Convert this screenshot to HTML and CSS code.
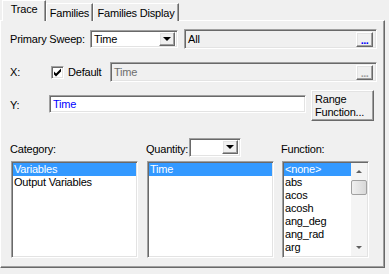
FILE: index.html
```html
<!DOCTYPE html>
<html lang="en">
<head>
    <meta charset="UTF-8">
    <title>Trace</title>
    <link rel="stylesheet" href="styles.css">
</head>
<body>
    <div class="tabs">
        <div class="tab tab-trace active">Trace</div>
        <div class="tab tab-families">Families</div>
        <div class="tab tab-display">Families Display</div>
    </div>

    <div class="panel">
        <!-- Primary sweep -->
        <div class="row row-sweep">
            <span class="sweep-label">Primary Sweep:</span>
            <div class="combo sweep-combo">
                <span class="combo-text">Time</span>
                <span class="drop"><span class="arrow-down"></span></span>
            </div>
            <div class="field all-field">
                <span class="field-text">All</span>
                <span class="dots">...</span>
            </div>
        </div>

        <!-- X -->
        <div class="row row-x">
            <span class="x-label">X:</span>
            <span class="check">
                <svg width="9" height="9" viewBox="0 0 9 9"><path d="M1 3.5 L3 5.5 L8 0.5 L8 3.5 L3 8.5 L1 6.5 Z" fill="#000"/></svg>
            </span>
            <span class="default-label">Default</span>
            <div class="field x-field">
                <span class="field-text disabled">Time</span>
                <span class="dots disabled">...</span>
            </div>
        </div>

        <!-- Y -->
        <div class="row row-y">
            <span class="y-label">Y:</span>
            <div class="textbox y-box">Time</div>
            <div class="button range-btn">Range<br>Function...</div>
        </div>

        <!-- Lists -->
        <div class="lists">
            <div class="col col-category">
                <div class="col-head"><span class="head-label">Category:</span></div>
                <div class="listbox">
                    <div class="item selected">Variables</div>
                    <div class="item">Output Variables</div>
                </div>
            </div>
            <div class="col col-quantity">
                <div class="col-head">
                    <span class="head-label">Quantity:</span>
                    <div class="combo quantity-combo">
                        <span class="combo-text"></span>
                        <span class="drop"><span class="arrow-down"></span></span>
                    </div>
                </div>
                <div class="listbox">
                    <div class="item selected">Time</div>
                </div>
            </div>
            <div class="col col-function">
                <div class="col-head"><span class="head-label">Function:</span></div>
                <div class="listbox function-list">
                    <div class="items">
                        <div class="item selected">&lt;none&gt;</div>
                        <div class="item">abs</div>
                        <div class="item">acos</div>
                        <div class="item">acosh</div>
                        <div class="item">ang_deg</div>
                        <div class="item">ang_rad</div>
                        <div class="item">arg</div>
                        <div class="item">asin</div>
                    </div>
                    <div class="scrollbar">
                        <span class="scroll-btn"><span class="arrow-up"></span></span>
                        <span class="thumb"></span>
                        <span class="track"></span>
                        <span class="scroll-btn"><span class="arrow-down small"></span></span>
                    </div>
                </div>
            </div>
        </div>
    </div>
</body>
</html>
```

FILE: styles.css
```css
/* General */
* {
    box-sizing: border-box;
}
body {
    margin: 0;
    width: 389px;
    height: 274px;
    overflow: hidden;
    background-color: #f0f0f0;
    font-family: "Liberation Sans", Arial, sans-serif;
    font-size: 11px;
    letter-spacing: -0.2px;
    color: #000;
}

/* Tabs */
.tabs {
    display: flex;
    align-items: flex-end;
    height: 21px;
    padding-left: 2px;
}
.tab {
    height: 18px;
    padding-top: 3px;
    text-align: center;
    line-height: 13px;
    background-color: #f0f0f0;
    border: 1px solid;
    border-bottom: none;
    border-color: #fff #696969 transparent #fff;
    box-shadow: inset -1px 0 #a0a0a0;
}
.tab.active {
    position: relative;
    z-index: 1;
    height: 21px;
    padding-top: 2px;
}
.tab-trace { width: 44px; }
.tab-families { width: 47px; }
.tab-display { width: 86px; }

/* Panel */
.panel {
    width: 385px;
    height: 248px;
    margin-top: -1px;
    padding: 8px 0 0 9px;
    border: 1px solid;
    border-color: #fff #696969 #696969 #fff;
    box-shadow: inset -1px -1px #a0a0a0;
}
.row {
    display: flex;
    align-items: center;
}

/* Shared controls */
.combo, .field, .textbox, .listbox, .check {
    border: 1px solid;
    border-color: #a0a0a0 #fff #fff #a0a0a0;
    box-shadow: inset 1px 1px #696969, inset -1px -1px #e3e3e3;
}
.combo {
    display: flex;
    align-items: center;
    height: 18px;
    padding: 2px;
    background-color: #fff;
}
.combo-text {
    flex: 1;
    padding-left: 1px;
}
.drop, .dots, .button, .scroll-btn {
    background-color: #f0f0f0;
    border: 1px solid;
    border-color: #fff #696969 #696969 #fff;
    box-shadow: inset -1px -1px #a0a0a0, inset 1px 1px #e3e3e3;
}
.drop {
    display: flex;
    align-items: center;
    justify-content: center;
    width: 16px;
    height: 14px;
}
.arrow-down {
    width: 0;
    height: 0;
    border-left: 4px solid transparent;
    border-right: 4px solid transparent;
    border-top: 4px solid #000;
}
.arrow-down.small {
    border-left-width: 3px;
    border-right-width: 3px;
    border-top: 3px solid #606060;
}
.arrow-up {
    width: 0;
    height: 0;
    border-left: 3px solid transparent;
    border-right: 3px solid transparent;
    border-bottom: 3px solid #606060;
}
.field {
    display: flex;
    align-items: center;
    height: 20px;
    padding: 2px 3px;
    background-color: #f0f0f0;
}
.field-text {
    flex: 1;
}
.disabled {
    color: #6d6d6d;
}
.dots {
    width: 17px;
    height: 15px;
    text-align: center;
    line-height: 15px;
    font-weight: bold;
    color: #0000ff;
    letter-spacing: -0.5px;
}
.dots.disabled {
    color: #a0a0a0;
}

/* Primary sweep row */
.row-sweep {
    height: 20px;
}
.sweep-label {
    width: 80px;
}
.sweep-combo {
    width: 88px;
}
.all-field {
    width: 193px;
    margin-left: 6px;
}

/* X row */
.row-x {
    height: 20px;
    margin-top: 13px;
}
.x-label {
    width: 41px;
}
.check {
    display: flex;
    align-items: center;
    justify-content: center;
    width: 13px;
    height: 13px;
    background-color: #fff;
}
.default-label {
    width: 42px;
    margin-left: 4px;
}
.x-field {
    width: 267px;
}

/* Y row */
.row-y {
    height: 31px;
    margin-top: 8px;
    align-items: flex-start;
}
.y-label {
    width: 39px;
    margin-top: 9px;
}
.y-box {
    width: 257px;
    height: 18px;
    margin-top: 5px;
    padding: 2px 3px;
    line-height: 13px;
    background-color: #fff;
    color: #0000ff;
}
.range-btn {
    width: 63px;
    height: 31px;
    margin-left: 5px;
    padding: 2px 3px;
    line-height: 13px;
}

/* Lists */
.lists {
    display: flex;
    margin-top: 16px;
}
.col {
    display: flex;
    flex-direction: column;
}
.col-category {
    width: 127px;
    margin-left: 1px;
}
.col-quantity {
    width: 127px;
    margin-left: 9px;
}
.col-function {
    width: 87px;
    margin-left: 8px;
}
.col-head {
    display: flex;
    align-items: center;
    height: 20px;
    margin-bottom: 4px;
    padding-top: 3px;
}
.head-label {
    margin-left: -1px;
}
.quantity-combo {
    width: 52px;
    height: 19px;
    margin-left: 1px;
    margin-top: -3px;
}
.listbox {
    height: 97px;
    padding: 1px;
    background-color: #fff;
    overflow: hidden;
}
.item {
    height: 13px;
    line-height: 13px;
    padding-left: 1px;
    white-space: nowrap;
}
.item.selected {
    background-color: #3399ff;
    color: #fff;
}
.function-list {
    display: flex;
}
.items {
    flex: 1;
    overflow: hidden;
}
.scrollbar {
    display: flex;
    flex-direction: column;
    width: 16px;
    background-color: #f4f4f4;
}
.scroll-btn {
    display: flex;
    align-items: center;
    justify-content: center;
    height: 17px;
    border-color: transparent;
    box-shadow: none;
    background-color: #f4f4f4;
}
.thumb {
    height: 15px;
    border: 1px solid #a0a0a0;
    border-radius: 2px;
    background: linear-gradient(to right, #f0f0f0, #d8d8d8);
}
.track {
    flex: 1;
}
```
